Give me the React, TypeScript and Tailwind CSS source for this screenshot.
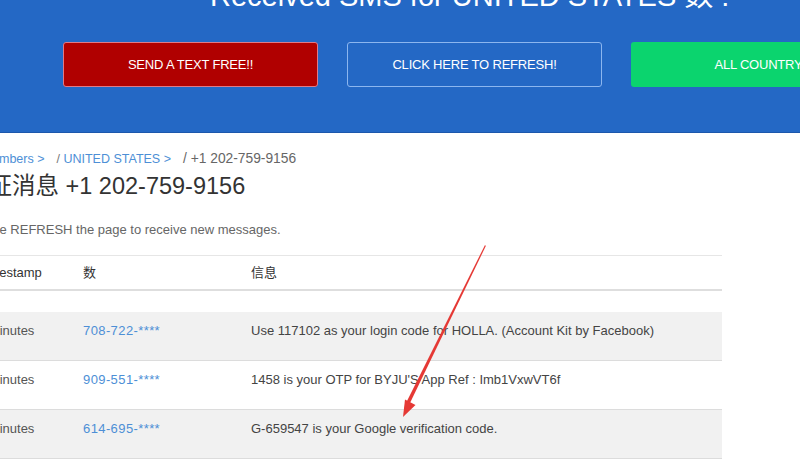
import React from 'react';

const rows = [
  { time: '3 minutes', num: '708-722-****', msg: 'Use 117102 as your login code for HOLLA. (Account Kit by Facebook)', shade: true },
  { time: '3 minutes', num: '909-551-****', msg: "1458 is your OTP for BYJU'S App Ref : Imb1VxwVT6f", shade: false },
  { time: '4 minutes', num: '614-695-****', msg: 'G-659547 is your Google verification code.', shade: true },
];

function Arrow() {
  return (
    <svg className="absolute inset-0 pointer-events-none" width="800" height="466" viewBox="0 0 800 466">
      <polygon points="485,245 485.8,246 409.5,404 406.5,402" fill="#e53935" />
      <polygon points="403,417 405,399.5 415.5,405" fill="#e53935" />
    </svg>
  );
}

function App() {
  return (
    <div className="relative w-[800px] h-[466px] overflow-hidden bg-white font-['Liberation_Sans','Noto_Sans_CJK_SC',sans-serif]">
      {/* Header */}
      <header className="h-[133px] bg-[#2468c5] border-b border-[#1c57ac]">
        <div className="h-[42px] flex items-end pb-[31px] pl-[210px]">
          <h1 className="text-white text-[29px] leading-[29px] whitespace-nowrap">Received SMS for UNITED STATES 数 :</h1>
        </div>
        <div className="flex gap-[29px] pl-[63px]">
          <button className="shrink-0 w-[255px] h-[45px] rounded-[3px] bg-[#b00000] border border-[#e07a86] text-white text-[13px] font-medium uppercase tracking-[-0.2px]">
            Send a text free!!
          </button>
          <button className="shrink-0 w-[255px] h-[45px] rounded-[3px] border border-[#8cb6ef] text-white text-[13px] font-medium uppercase tracking-[-0.2px]">
            Click here to refresh!
          </button>
          <button className="shrink-0 w-[255px] h-[45px] rounded-[3px] bg-[#0bd46e] text-white text-[13px] font-medium uppercase tracking-[-0.2px]">
            All country
          </button>
        </div>
      </header>

      {/* Main */}
      <main className="-ml-[40px] w-[762px] pt-[18px]">
        <nav className="pl-[23px] text-[12.5px] leading-[16px] whitespace-nowrap flex items-baseline gap-[12px]">
          <span className="text-[#4d8fd6]">Numbers &gt;</span>
          <span className="text-[#4d8fd6]"><span className="text-[#777]">/</span> UNITED STATES &gt;</span>
          <span className="text-[#666] text-[13.8px]">/ +1 202-759-9156</span>
        </nav>
        <h2 className="pl-[5px] mt-[6px] text-[23.5px] leading-[26px] text-[#333] whitespace-nowrap">验证消息 +1 202-759-9156</h2>
        <p className="pl-[7px] mt-[23px] text-[13px] leading-[16px] text-[#666] whitespace-nowrap">Please REFRESH the page to receive new messages.</p>

        <div className="mt-[17px] border-t border-[#e6e6e6] text-[13px]">
          <div className="grid grid-cols-[105px_168px_1fr] h-[35px] items-center border-b-2 border-[#dedede] text-[#333]">
            <div className="pl-[18px]">Timestamp</div>
            <div className="pl-[18px]">数</div>
            <div className="pl-[18px]">信息</div>
          </div>
          <div className="h-[21px]" />
          {rows.map((r, i) => (
            <div
              key={i}
              className={`grid grid-cols-[105px_168px_1fr] h-[49px] items-start pt-[11px] leading-[16px] border-b border-[#dcdcdc] ${r.shade ? 'bg-[#f1f1f1]' : 'bg-white'}`}
            >
              <div className="pl-[18px] text-[#555] whitespace-nowrap">{r.time}</div>
              <div className="pl-[18px] text-[#4d8fd6] tracking-[0.4px]">{r.num}</div>
              <div className="pl-[18px] text-[#444] whitespace-nowrap">{r.msg}</div>
            </div>
          ))}
        </div>
      </main>

      <Arrow />
    </div>
  );
}

export default App;
